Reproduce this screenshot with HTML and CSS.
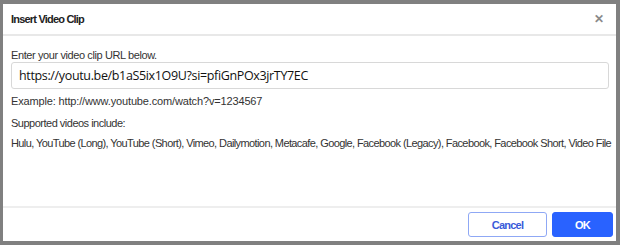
FILE: index.html
```html
<!DOCTYPE html>
<html lang="en">
<head>
    <meta charset="UTF-8">
    <title>Insert Video Clip</title>
    <link rel="stylesheet" href="styles.css">
</head>
<body>
    <div class="dialog">
        <div class="dialog-header">
            <h1>Insert Video Clip</h1>
            <span class="close">&#x2715;</span>
        </div>

        <div class="dialog-body">
            <label for="clip_url">Enter your video clip URL below.</label>
            <input type="text" id="clip_url" class="url-input" value="https://youtu.be/b1aS5ix1O9U?si=pfiGnPOx3jrTY7EC">
            <p class="example">Example: http://www.youtube.com/watch?v=1234567</p>
            <p class="supported">Supported videos include:</p>
            <p class="list">Hulu, YouTube (Long), YouTube (Short), Vimeo, Dailymotion, Metacafe, Google, Facebook (Legacy), Facebook, Facebook Short, Video File</p>
        </div>

        <div class="dialog-footer">
            <button class="btn-cancel">Cancel</button>
            <button class="btn-ok">OK</button>
        </div>
    </div>
</body>
</html>
```

FILE: styles.css
```css
/* Page behind the dialog */
html, body {
    margin: 0;
    padding: 0;
    box-sizing: border-box;
    font-family: "Liberation Sans", Arial, sans-serif;
}

body {
    background-color: #808080;
    padding: 4px 0 0 3px;
    height: 245px;
    overflow: hidden;
}

/* Dialog box */
.dialog {
    width: 613px;
    height: 237px;
    background-color: #fff;
    display: flex;
    flex-direction: column;
}

.dialog-header {
    height: 30px;
    display: flex;
    align-items: center;
    justify-content: space-between;
    padding: 0 12px 0 8px;
    border-bottom: 2px solid #e8e8e8;
}

.dialog-header h1 {
    margin: 0;
    font-size: 11px;
    font-weight: bold;
    letter-spacing: -0.8px;
    color: #222;
}

.close {
    font-size: 12px;
    font-weight: bold;
    color: #8a8a8a;
}

/* Body */
.dialog-body {
    flex: 1;
    padding: 12px 7px 0 8px;
    font-size: 11px;
    line-height: 14px;
    letter-spacing: -0.5px;
    color: #333;
}

.dialog-body label {
    display: block;
    letter-spacing: -0.4px;
}

.url-input {
    display: block;
    box-sizing: border-box;
    width: 598px;
    height: 27px;
    margin: 0;
    padding: 0 7px;
    border: 1px solid #d8d8d8;
    border-radius: 3px;
    font-family: "Open Sans", sans-serif;
    font-size: 12.5px;
    letter-spacing: -0.35px;
    color: #111;
}

.dialog-body p {
    margin: 0;
}

.example {
    margin-top: 5px !important;
    letter-spacing: -0.15px;
}

.supported {
    margin-top: 8px !important;
}

.list {
    margin-top: 6px !important;
    white-space: nowrap;
    letter-spacing: -0.6px;
}

/* Footer buttons */
.dialog-footer {
    display: flex;
    justify-content: flex-end;
    gap: 5px;
    padding: 4px 3px 4px 0;
    border-top: 2px solid #eeeeee;
}

.dialog-footer button {
    height: 25px;
    border-radius: 3px;
    font-family: "Liberation Sans", Arial, sans-serif;
    font-size: 11px;
    font-weight: bold;
    letter-spacing: -0.8px;
    cursor: pointer;
}

.btn-cancel {
    width: 79px;
    background-color: #fff;
    border: 1px solid #8fa8f5;
    color: #3a5bd9;
}

.btn-ok {
    width: 61px;
    background-color: #2962ff;
    border: 1px solid #2962ff;
    color: #fff;
}
```
